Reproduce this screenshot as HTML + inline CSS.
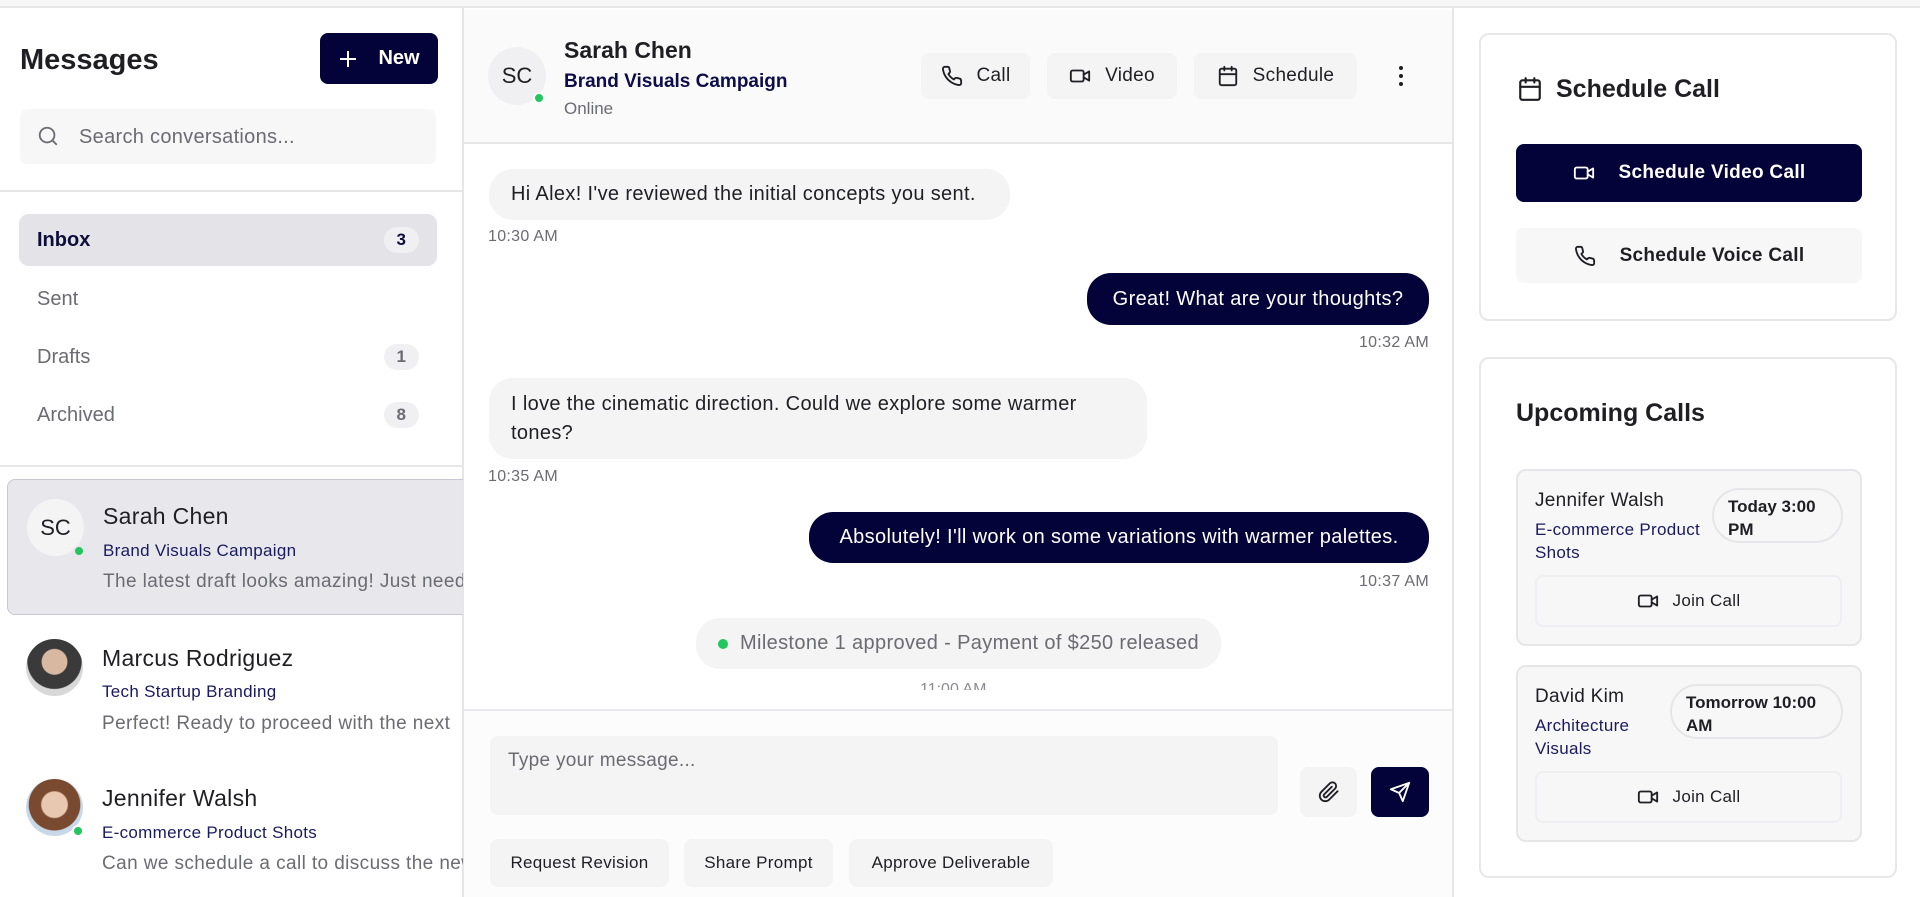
<!DOCTYPE html>
<html><head><meta charset="utf-8"><style>
*{box-sizing:border-box;margin:0;padding:0}
body{width:1920px;height:897px;overflow:hidden;background:#fff;font-family:"Liberation Sans",Arial,sans-serif;color:#1f1f23;position:relative}
.a{position:absolute}
.ic{fill:none;stroke:currentColor;stroke-width:2;stroke-linecap:round;stroke-linejoin:round}
.btn{position:absolute;background:#f4f4f5;border-radius:8px;display:flex;align-items:center;justify-content:center;gap:14px;font-size:19px;color:#1f1f23;letter-spacing:.3px}
.badge{position:absolute;right:18px;top:50%;transform:translateY(-50%);background:#f0f0f2;border-radius:14px;padding:3px 13px;font-size:17px;font-weight:bold}
.nav{position:absolute;left:19px;width:418px;height:52px;border-radius:10px;display:flex;align-items:center;padding-left:18px;font-size:20px;color:#6b6b72}
.bub{position:absolute;border-radius:24px;padding:0 22px;display:flex;align-items:center;font-size:20px;line-height:29px;letter-spacing:.35px}
.in{background:#f4f4f5;color:#1f1f23}
.out{background:#03033a;color:#fff}
.t{position:absolute;font-size:16px;color:#6b6b72;letter-spacing:.3px}
.cv .n{position:absolute;left:95px;font-size:23px;color:#1f1f23;letter-spacing:.3px}
.cv .s{position:absolute;left:95px;font-size:17px;color:#1a1a5e;letter-spacing:.3px}
.cv .p{position:absolute;left:95px;font-size:19px;color:#6b6b72;white-space:nowrap;letter-spacing:.4px}
.chip{position:absolute;top:839px;height:48px;background:#f4f4f5;border-radius:8px;font-size:17px;display:flex;align-items:center;justify-content:center;color:#1f1f23;letter-spacing:.3px}
</style></head><body>
<div class="a" style="left:0;top:0;width:1920px;height:8px;background:#f7f7f8;border-bottom:2px solid #e8e8ea"></div>
<!-- left -->
<div class="a" style="left:462px;top:8px;width:2px;height:889px;background:#e6e6e8"></div>
<div class="a" style="left:20px;top:44px;font-size:29px;font-weight:bold;color:#1f1f23">Messages</div>
<div class="a" style="left:320px;top:33px;width:118px;height:51px;background:#03033a;border-radius:8px;color:#fff;display:flex;align-items:center;justify-content:center;gap:20px;font-size:20px;font-weight:bold"><svg width="20" height="20" viewBox="0 0 20 20"><path d="M10 2v16M2 10h16" stroke="#fff" stroke-width="2"/></svg>New</div>
<div class="a" style="left:20px;top:109px;width:416px;height:55px;background:#f7f7f8;border-radius:8px"></div>
<svg class="a ic" style="left:37px;top:125px;color:#6b6b72" width="22" height="22" viewBox="0 0 24 24"><circle cx="11" cy="11" r="8"/><path d="M21 21l-4.3-4.3"/></svg>
<div class="a" style="left:79px;top:126px;font-size:20px;color:#6b6b72;letter-spacing:.3px">Search conversations...</div>
<div class="a" style="left:0;top:190px;width:462px;height:2px;background:#e6e6e8"></div>
<div class="nav" style="top:214px;background:#e4e4e8;color:#0d0d3a;font-weight:bold">Inbox<span class="badge">3</span></div>
<div class="nav" style="top:273px">Sent</div>
<div class="nav" style="top:331px">Drafts<span class="badge">1</span></div>
<div class="nav" style="top:389px">Archived<span class="badge">8</span></div>
<div class="a" style="left:0;top:465px;width:462px;height:2px;background:#e6e6e8"></div>
<div class="cv a" style="left:7px;top:479px;width:456px;height:136px;background:#e8e8ec;border:1px solid #c8c8d0;border-right:none;border-radius:8px 0 0 8px;overflow:hidden">
 <div class="a" style="left:19px;top:19px;width:57px;height:57px;border-radius:50%;background:#f4f4f5;font-size:22px;display:flex;align-items:center;justify-content:center">SC</div>
 <div class="a" style="left:65px;top:65px;width:12px;height:12px;border-radius:50%;background:#22c55e;border:2px solid #e8e8ec"></div>
 <div class="n" style="top:23px">Sarah Chen</div><div class="s" style="top:61px">Brand Visuals Campaign</div><div class="p" style="top:91px">The latest draft looks amazing! Just need</div>
</div>
<div class="cv a" style="left:7px;top:625px;width:456px;height:136px;overflow:hidden">
 <div class="a" style="left:19px;top:14px;width:57px;height:57px;border-radius:50%;background:radial-gradient(circle at 50% 40%,#d8b8a0 0 28%,#3a3a3a 30% 60%,#d8d8d8 62%)"></div>
 <div class="n" style="top:20px">Marcus Rodriguez</div><div class="s" style="top:57px">Tech Startup Branding</div><div class="p" style="top:88px">Perfect! Ready to proceed with the next</div>
</div>
<div class="cv a" style="left:7px;top:764px;width:456px;height:133px;overflow:hidden">
 <div class="a" style="left:19px;top:15px;width:57px;height:57px;border-radius:50%;background:radial-gradient(circle at 50% 45%,#e8c8b0 0 30%,#7a4a30 33% 60%,#c8d8e8 62%)"></div>
 <div class="a" style="left:65px;top:61px;width:12px;height:12px;border-radius:50%;background:#22c55e;border:2px solid #fff"></div>
 <div class="n" style="top:21px">Jennifer Walsh</div><div class="s" style="top:59px">E-commerce Product Shots</div><div class="p" style="top:89px">Can we schedule a call to discuss the new</div>
</div>
<!-- middle -->
<div class="a" style="left:464px;top:10px;width:989px;height:134px;background:#fafafa;border-bottom:2px solid #e8e8ea"></div>
<div class="a" style="left:1452px;top:8px;width:2px;height:889px;background:#e6e6e8"></div>
<div class="a" style="left:488px;top:47px;width:58px;height:58px;border-radius:50%;background:#f0f0f2;font-size:22px;display:flex;align-items:center;justify-content:center">SC</div>
<div class="a" style="left:533px;top:92px;width:12px;height:12px;border-radius:50%;background:#22c55e;border:2px solid #fafafa"></div>
<div class="a" style="left:564px;top:37px;font-size:23px;font-weight:bold">Sarah Chen</div>
<div class="a" style="left:564px;top:71px;font-size:19px;color:#0d0d4a;font-weight:bold">Brand Visuals Campaign</div>
<div class="a" style="left:564px;top:99px;font-size:17px;color:#6b6b72">Online</div>
<div class="btn" style="left:921px;top:53px;width:109px;height:46px"><svg class="ic" width="22" height="22" viewBox="0 0 24 24"><path d="M22 16.9v3a2 2 0 0 1-2.2 2 19.8 19.8 0 0 1-8.6-3.1 19.5 19.5 0 0 1-6-6A19.8 19.8 0 0 1 2.1 4.2 2 2 0 0 1 4.1 2h3a2 2 0 0 1 2 1.7c.1.9.4 1.8.7 2.7a2 2 0 0 1-.5 2.1L8 9.8a16 16 0 0 0 6 6l1.3-1.3a2 2 0 0 1 2.1-.4c.9.3 1.8.6 2.7.7a2 2 0 0 1 1.7 2z"/></svg>Call</div>
<div class="btn" style="left:1047px;top:53px;width:130px;height:46px"><svg class="ic" width="22" height="22" viewBox="0 0 24 24"><rect x="2" y="6" width="14" height="12" rx="2"/><path d="M16 10.5l6-3.5v10l-6-3.5"/></svg>Video</div>
<div class="btn" style="left:1194px;top:53px;width:163px;height:46px"><svg class="ic" width="22" height="22" viewBox="0 0 24 24"><rect x="3" y="4" width="18" height="18" rx="2"/><path d="M16 2v4M8 2v4M3 10h18"/></svg>Schedule</div>
<svg class="a" style="left:1393px;top:64px" width="16" height="24" viewBox="0 0 16 24"><circle cx="8" cy="4" r="2" fill="#1f1f23"/><circle cx="8" cy="12" r="2" fill="#1f1f23"/><circle cx="8" cy="20" r="2" fill="#1f1f23"/></svg>
<div class="bub in" style="left:489px;top:169px;height:51px;width:521px">Hi Alex! I've reviewed the initial concepts you sent.</div>
<div class="t" style="left:488px;top:228px">10:30 AM</div>
<div class="bub out" style="left:1087px;top:273px;height:52px;width:342px;justify-content:center">Great! What are your thoughts?</div>
<div class="t" style="right:491px;top:334px">10:32 AM</div>
<div class="bub in" style="left:489px;top:378px;height:81px;width:658px">I love the cinematic direction. Could we explore some warmer tones?</div>
<div class="t" style="left:488px;top:468px">10:35 AM</div>
<div class="bub out" style="left:809px;top:512px;height:51px;width:620px;justify-content:center">Absolutely! I'll work on some variations with warmer palettes.</div>
<div class="t" style="right:491px;top:573px">10:37 AM</div>
<div class="bub" style="left:696px;top:618px;height:51px;width:525px;background:#f4f4f5;color:#6b6b72;justify-content:center;gap:12px"><span style="width:10px;height:10px;border-radius:50%;background:#22c55e;display:inline-block"></span>Milestone 1 approved - Payment of $250 released</div>
<div class="a" style="left:920px;top:676px;height:14px;overflow:hidden;font-size:16px;color:#8b8b92;line-height:28px">11:00 AM</div>
<div class="a" style="left:464px;top:709px;width:988px;height:188px;background:#fcfcfc;border-top:2px solid #e8e8ea"></div>
<div class="a" style="left:490px;top:736px;width:788px;height:79px;background:#f4f4f5;border-radius:8px;padding:14px 18px;font-size:19px;color:#6b6b72;letter-spacing:.3px">Type your message...</div>
<div class="btn" style="left:1300px;top:767px;width:57px;height:50px"><svg class="ic" width="22" height="22" viewBox="0 0 24 24"><path d="M21.4 11.1l-9.2 9.2a6 6 0 0 1-8.5-8.5l9.2-9.2a4 4 0 0 1 5.7 5.7l-9.2 9.2a2 2 0 0 1-2.8-2.8l8.5-8.5"/></svg></div>
<div class="btn" style="left:1371px;top:767px;width:58px;height:50px;background:#03033a;color:#fff"><svg class="ic" width="22" height="22" viewBox="0 0 24 24"><path d="M22 2L11 13M22 2l-7 20-4-9-9-4 20-7z"/></svg></div>
<div class="chip" style="left:490px;width:179px">Request Revision</div>
<div class="chip" style="left:684px;width:149px">Share Prompt</div>
<div class="chip" style="left:849px;width:204px">Approve Deliverable</div>
<!-- right -->
<div class="a" style="left:1479px;top:33px;width:418px;height:288px;border:2px solid #e8e8ea;border-radius:10px"></div>
<svg class="a ic" style="left:1517px;top:76px" width="26" height="26" viewBox="0 0 24 24"><rect x="3" y="4" width="18" height="18" rx="2"/><path d="M16 2v4M8 2v4M3 10h18"/></svg>
<div class="a" style="left:1556px;top:75px;font-size:25px;font-weight:bold">Schedule Call</div>
<div class="btn" style="left:1516px;top:144px;width:346px;height:58px;background:#03033a;color:#fff;font-weight:bold;gap:24px"><svg class="ic" width="22" height="22" viewBox="0 0 24 24"><rect x="2" y="6" width="14" height="12" rx="2"/><path d="M16 10.5l6-3.5v10l-6-3.5"/></svg>Schedule Video Call</div>
<div class="btn" style="left:1516px;top:228px;width:346px;height:55px;background:#f7f7f8;font-weight:bold;gap:24px"><svg class="ic" width="22" height="22" viewBox="0 0 24 24"><path d="M22 16.9v3a2 2 0 0 1-2.2 2 19.8 19.8 0 0 1-8.6-3.1 19.5 19.5 0 0 1-6-6A19.8 19.8 0 0 1 2.1 4.2 2 2 0 0 1 4.1 2h3a2 2 0 0 1 2 1.7c.1.9.4 1.8.7 2.7a2 2 0 0 1-.5 2.1L8 9.8a16 16 0 0 0 6 6l1.3-1.3a2 2 0 0 1 2.1-.4c.9.3 1.8.6 2.7.7a2 2 0 0 1 1.7 2z"/></svg>Schedule Voice Call</div>
<div class="a" style="left:1479px;top:357px;width:418px;height:521px;border:2px solid #e8e8ea;border-radius:10px"></div>
<div class="a" style="left:1516px;top:399px;font-size:25px;font-weight:bold">Upcoming Calls</div>
<div class="a" style="left:1516px;top:469px;width:346px;height:177px;background:#f7f7f8;border:2px solid #e6e6e8;border-radius:10px"></div>
<div class="a" style="left:1535px;top:490px;font-size:19px;letter-spacing:.3px">Jennifer Walsh</div>
<div class="a" style="left:1535px;top:518px;font-size:17px;color:#1a1a5e;line-height:23px;width:180px;letter-spacing:.3px">E-commerce Product Shots</div>
<div class="a" style="left:1712px;top:488px;width:131px;height:55px;border:2px solid #e6e6e8;border-radius:28px;padding:5px 14px;font-size:17px;font-weight:bold;line-height:23px">Today 3:00 PM</div>
<div class="btn" style="left:1535px;top:575px;width:307px;height:52px;background:#f7f7f8;border:2px solid #efeff1;font-size:17px"><svg class="ic" width="22" height="22" viewBox="0 0 24 24"><rect x="2" y="6" width="14" height="12" rx="2"/><path d="M16 10.5l6-3.5v10l-6-3.5"/></svg>Join Call</div>
<div class="a" style="left:1516px;top:665px;width:346px;height:177px;background:#f7f7f8;border:2px solid #e6e6e8;border-radius:10px"></div>
<div class="a" style="left:1535px;top:686px;font-size:19px;letter-spacing:.3px">David Kim</div>
<div class="a" style="left:1535px;top:714px;font-size:17px;color:#1a1a5e;line-height:23px;width:120px;letter-spacing:.3px">Architecture Visuals</div>
<div class="a" style="left:1670px;top:684px;width:173px;height:55px;border:2px solid #e6e6e8;border-radius:28px;padding:5px 14px;font-size:17px;font-weight:bold;line-height:23px">Tomorrow 10:00 AM</div>
<div class="btn" style="left:1535px;top:771px;width:307px;height:52px;background:#f7f7f8;border:2px solid #efeff1;font-size:17px"><svg class="ic" width="22" height="22" viewBox="0 0 24 24"><rect x="2" y="6" width="14" height="12" rx="2"/><path d="M16 10.5l6-3.5v10l-6-3.5"/></svg>Join Call</div>
</body></html>
